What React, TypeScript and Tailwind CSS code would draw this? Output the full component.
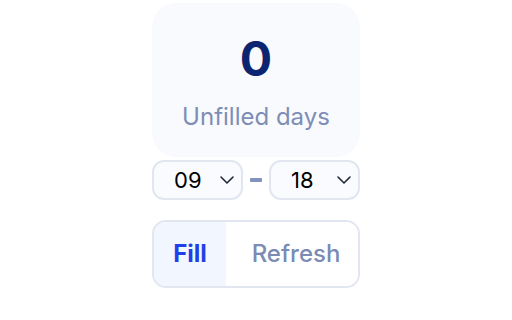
import React from 'react';

function Chevron() {
    return (
        <svg width="16" height="10" viewBox="0 0 16 10" fill="none" className="text-[#1f2937]">
            <path d="M2 2L8 8L14 2" stroke="currentColor" strokeWidth="1.6" strokeLinecap="round" strokeLinejoin="round" />
        </svg>
    );
}

function HourSelect({ value }: { value: string }) {
    return (
        <div className="flex h-[40px] w-[91px] items-center justify-between rounded-[12px] border-2 border-[#e1e6f1] bg-[#f9fbff] pl-[20px] pr-[6px]">
            <span className="text-[22px] text-black">{value}</span>
            <Chevron />
        </div>
    );
}

export default function App() {
    return (
        <div className="min-h-[320px] w-full bg-white pt-[3px]" style={{ fontFamily: 'Inter, "Noto Sans", sans-serif' }}>
            <div className="mx-auto flex w-[208px] flex-col">
                {/* Counter card */}
                <div className="flex h-[154px] flex-col items-center rounded-[24px] bg-[#f8fafd] pt-[28px]">
                    <div className="text-[48px] font-bold leading-[56px] text-[#0b2570]">0</div>
                    <div className="mt-[15px] text-[24px] leading-[30px] text-[#7d8db5]">Unfilled days</div>
                </div>

                {/* Hour range */}
                <div className="mt-[3px] flex items-center gap-[7px]">
                    <HourSelect value="09" />
                    <div className="h-[4px] w-[12px] rounded-[1px] bg-[#8193bd]" />
                    <HourSelect value="18" />
                </div>

                {/* Actions */}
                <div className="mt-[20px] flex h-[68px] overflow-hidden rounded-[14px] border-2 border-[#e1e6f1]">
                    <button className="flex w-[72px] items-center justify-center bg-[#f2f6fe] text-[24px] font-bold text-[#1f40e8]">
                        Fill
                    </button>
                    <button className="flex flex-1 items-center justify-center bg-white pl-[8px] text-[24px] font-medium text-[#7b8bb3]">
                        Refresh
                    </button>
                </div>
            </div>
        </div>
    );
}
